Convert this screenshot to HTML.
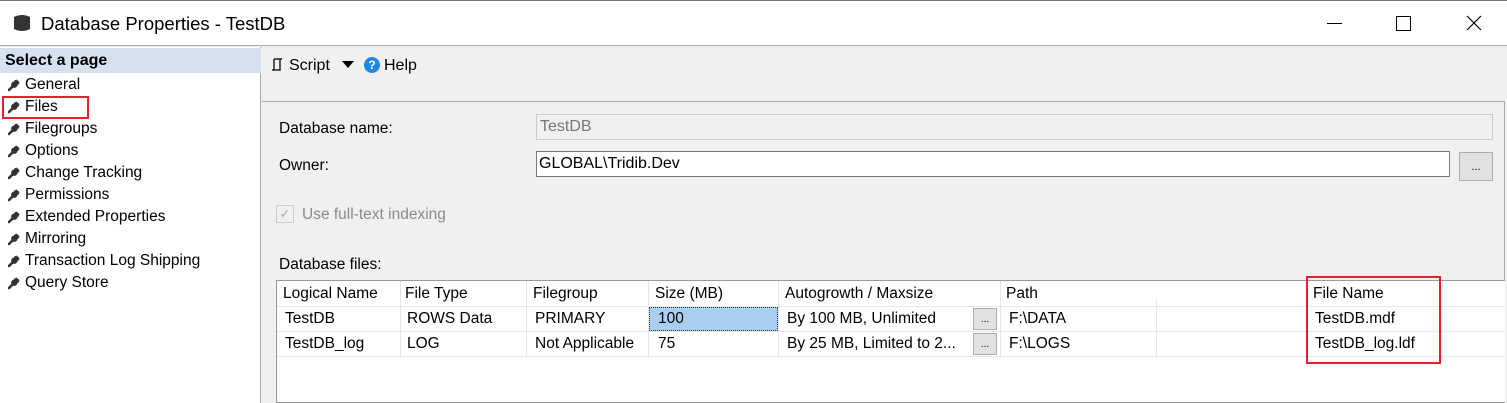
<!DOCTYPE html>
<html><head><style>
*{margin:0;padding:0;box-sizing:border-box}
body{width:1507px;height:403px;overflow:hidden;background:#f0f0f0;font-family:"Liberation Sans",sans-serif;font-size:15.5px;color:#000;position:relative}
.a{position:absolute}
.nav div{position:absolute;left:8px;height:22px;line-height:22px;padding-left:17px}
.nav svg{position:absolute;left:0;top:5px}
.cell{position:absolute;height:25px;line-height:25px;white-space:nowrap}
.vl{position:absolute;width:1px;background:#e6e6e6}
.btn{position:absolute;width:24px;height:22px;background:#e1e1e1;border:1px solid #adadad;font-size:10px;text-align:center;line-height:22px}
</style></head><body>
<svg width="0" height="0" style="position:absolute"><defs><g id="w"><path d="M1 11 L6 6" stroke="#333" stroke-width="2.6" stroke-linecap="round"/><path d="M6.5 2.5 A3.2 3.2 0 1 0 9.5 5.5 L11.5 3.5 A4 4 0 0 1 9 0.5Z" fill="#333"/><circle cx="8.5" cy="3.5" r="2.8" fill="#333"/><path d="M9 1 L12 1 L12 3.5" fill="#fff"/></g></defs></svg>
<div class="a" style="left:0;top:0;width:1507px;height:46px;background:#fff;border-top:1px solid #777;border-bottom:1px solid #aaa"></div>
<svg class="a" style="left:13px;top:13px" width="18" height="20"><path d="M1 4 Q9 0 17 4 V16 Q9 20 1 16Z" fill="#333"/></svg>
<div class="a" style="left:41px;top:13px;font-size:18.5px">Database Properties - TestDB</div>
<div class="a" style="left:1327px;top:23px;width:15px;height:1px;background:#000"></div>
<div class="a" style="left:1396px;top:16px;width:15px;height:15px;border:1px solid #000"></div>
<svg class="a" style="left:1466px;top:15px" width="16" height="16"><path d="M1 1L15 15M15 1L1 15" stroke="#000" stroke-width="1.2"/></svg>
<div class="a" style="left:0;top:47px;width:261px;height:356px;background:#fff;border-right:1px solid #aaa"></div>
<div class="a" style="left:0;top:48px;width:261px;height:25px;background:#d5e1ee;font-weight:bold;font-size:16px;line-height:25px;padding-left:5px">Select a page</div>
<div class="nav">
<div style="top:74px"><svg width="13" height="13"><use href="#w"/></svg>General</div>
<div style="top:96px"><svg width="13" height="13"><use href="#w"/></svg>Files</div>
<div style="top:118px"><svg width="13" height="13"><use href="#w"/></svg>Filegroups</div>
<div style="top:140px"><svg width="13" height="13"><use href="#w"/></svg>Options</div>
<div style="top:162px"><svg width="13" height="13"><use href="#w"/></svg>Change Tracking</div>
<div style="top:184px"><svg width="13" height="13"><use href="#w"/></svg>Permissions</div>
<div style="top:206px"><svg width="13" height="13"><use href="#w"/></svg>Extended Properties</div>
<div style="top:228px"><svg width="13" height="13"><use href="#w"/></svg>Mirroring</div>
<div style="top:250px"><svg width="13" height="13"><use href="#w"/></svg>Transaction Log Shipping</div>
<div style="top:272px"><svg width="13" height="13"><use href="#w"/></svg>Query Store</div>
</div>
<div class="a" style="left:2px;top:96px;width:87px;height:23px;border:2px solid #e8202a"></div>
<svg class="a" style="left:271px;top:58px" width="12" height="14"><path d="M3 1H11M3 1V12H1M9 1V12H3" stroke="#222" stroke-width="1.5" fill="none"/></svg>
<div class="a" style="left:289px;top:57px;font-size:16px">Script</div>
<svg class="a" style="left:342px;top:61px" width="12" height="7"><path d="M0 0H12L6 7Z" fill="#000"/></svg>
<div class="a" style="left:364px;top:57px;width:16px;height:16px;border-radius:50%;background:#1e88e5;color:#fff;font-size:12px;text-align:center;line-height:16px;font-weight:bold">?</div>
<div class="a" style="left:384px;top:57px;font-size:16px">Help</div>
<div class="a" style="left:262px;top:101px;width:1243px;height:302px;border-top:1px solid #aaa;border-right:1px solid #aaa"></div>
<div class="a" style="left:279px;top:120px">Database name:</div>
<div class="a" style="left:536px;top:114px;width:957px;height:26px;border:1px solid #ccc;color:#777;padding-left:3px;line-height:24px;font-size:16px">TestDB</div>
<div class="a" style="left:279px;top:157px">Owner:</div>
<div class="a" style="left:536px;top:151px;width:914px;height:26px;border:1px solid #7a7a7a;background:#fff;padding-left:2px;line-height:24px;font-size:16px">GLOBAL\Tridib.Dev</div>
<div class="a" style="left:1459px;top:152px;width:34px;height:29px;background:#e1e1e1;border:1px solid #adadad;text-align:center;font-size:11px;line-height:28px">...</div>
<div class="a" style="left:276px;top:205px;width:18px;height:18px;border:1px solid #ccc;color:#aaa;font-size:13px;text-align:center;line-height:16px">✓</div>
<div class="a" style="left:302px;top:206px;color:#8a8a8a">Use full-text indexing</div>
<div class="a" style="left:279px;top:256px">Database files:</div>
<div class="a" style="left:276px;top:280px;width:1229px;height:123px;background:#fff;border:1px solid #999;border-right:none"></div>
<div class="a" style="left:277px;top:306px;width:1228px;height:1px;background:#e6e6e6"></div>
<div class="a" style="left:277px;top:331px;width:1228px;height:1px;background:#e6e6e6"></div>
<div class="a" style="left:277px;top:356px;width:1228px;height:1px;background:#e6e6e6"></div>
<div class="vl" style="left:400px;top:281px;height:75px"></div>
<div class="vl" style="left:526px;top:281px;height:75px"></div>
<div class="vl" style="left:648px;top:281px;height:75px"></div>
<div class="vl" style="left:778px;top:281px;height:75px"></div>
<div class="vl" style="left:1000px;top:281px;height:75px"></div>
<div class="vl" style="left:1156px;top:300px;height:56px"></div>
<div class="vl" style="left:1307px;top:281px;height:75px"></div>
<div class="a" style="left:649px;top:307px;width:129px;height:24px;background:#a8cff0;border:1px dotted #333"></div>
<div class="cell" style="left:283px;top:281px">Logical Name</div>
<div class="cell" style="left:405px;top:281px">File Type</div>
<div class="cell" style="left:533px;top:281px">Filegroup</div>
<div class="cell" style="left:655px;top:281px">Size (MB)</div>
<div class="cell" style="left:785px;top:281px">Autogrowth / Maxsize</div>
<div class="cell" style="left:1006px;top:281px">Path</div>
<div class="cell" style="left:1313px;top:281px">File Name</div>
<div class="cell" style="left:285px;top:306px">TestDB</div>
<div class="cell" style="left:407px;top:306px">ROWS Data</div>
<div class="cell" style="left:535px;top:306px">PRIMARY</div>
<div class="cell" style="left:658px;top:306px">100</div>
<div class="cell" style="left:787px;top:306px">By 100 MB, Unlimited</div>
<div class="btn" style="left:973px;top:308px">...</div>
<div class="cell" style="left:1009px;top:306px">F:\DATA</div>
<div class="cell" style="left:1315px;top:306px">TestDB.mdf</div>
<div class="cell" style="left:285px;top:331px">TestDB_log</div>
<div class="cell" style="left:407px;top:331px">LOG</div>
<div class="cell" style="left:535px;top:331px">Not Applicable</div>
<div class="cell" style="left:658px;top:331px">75</div>
<div class="cell" style="left:787px;top:331px">By 25 MB, Limited to 2...</div>
<div class="btn" style="left:973px;top:333px">...</div>
<div class="cell" style="left:1009px;top:331px">F:\LOGS</div>
<div class="cell" style="left:1315px;top:331px">TestDB_log.ldf</div>
<div class="a" style="left:1306px;top:276px;width:135px;height:88px;border:2px solid #e8202a"></div>
</body></html>
